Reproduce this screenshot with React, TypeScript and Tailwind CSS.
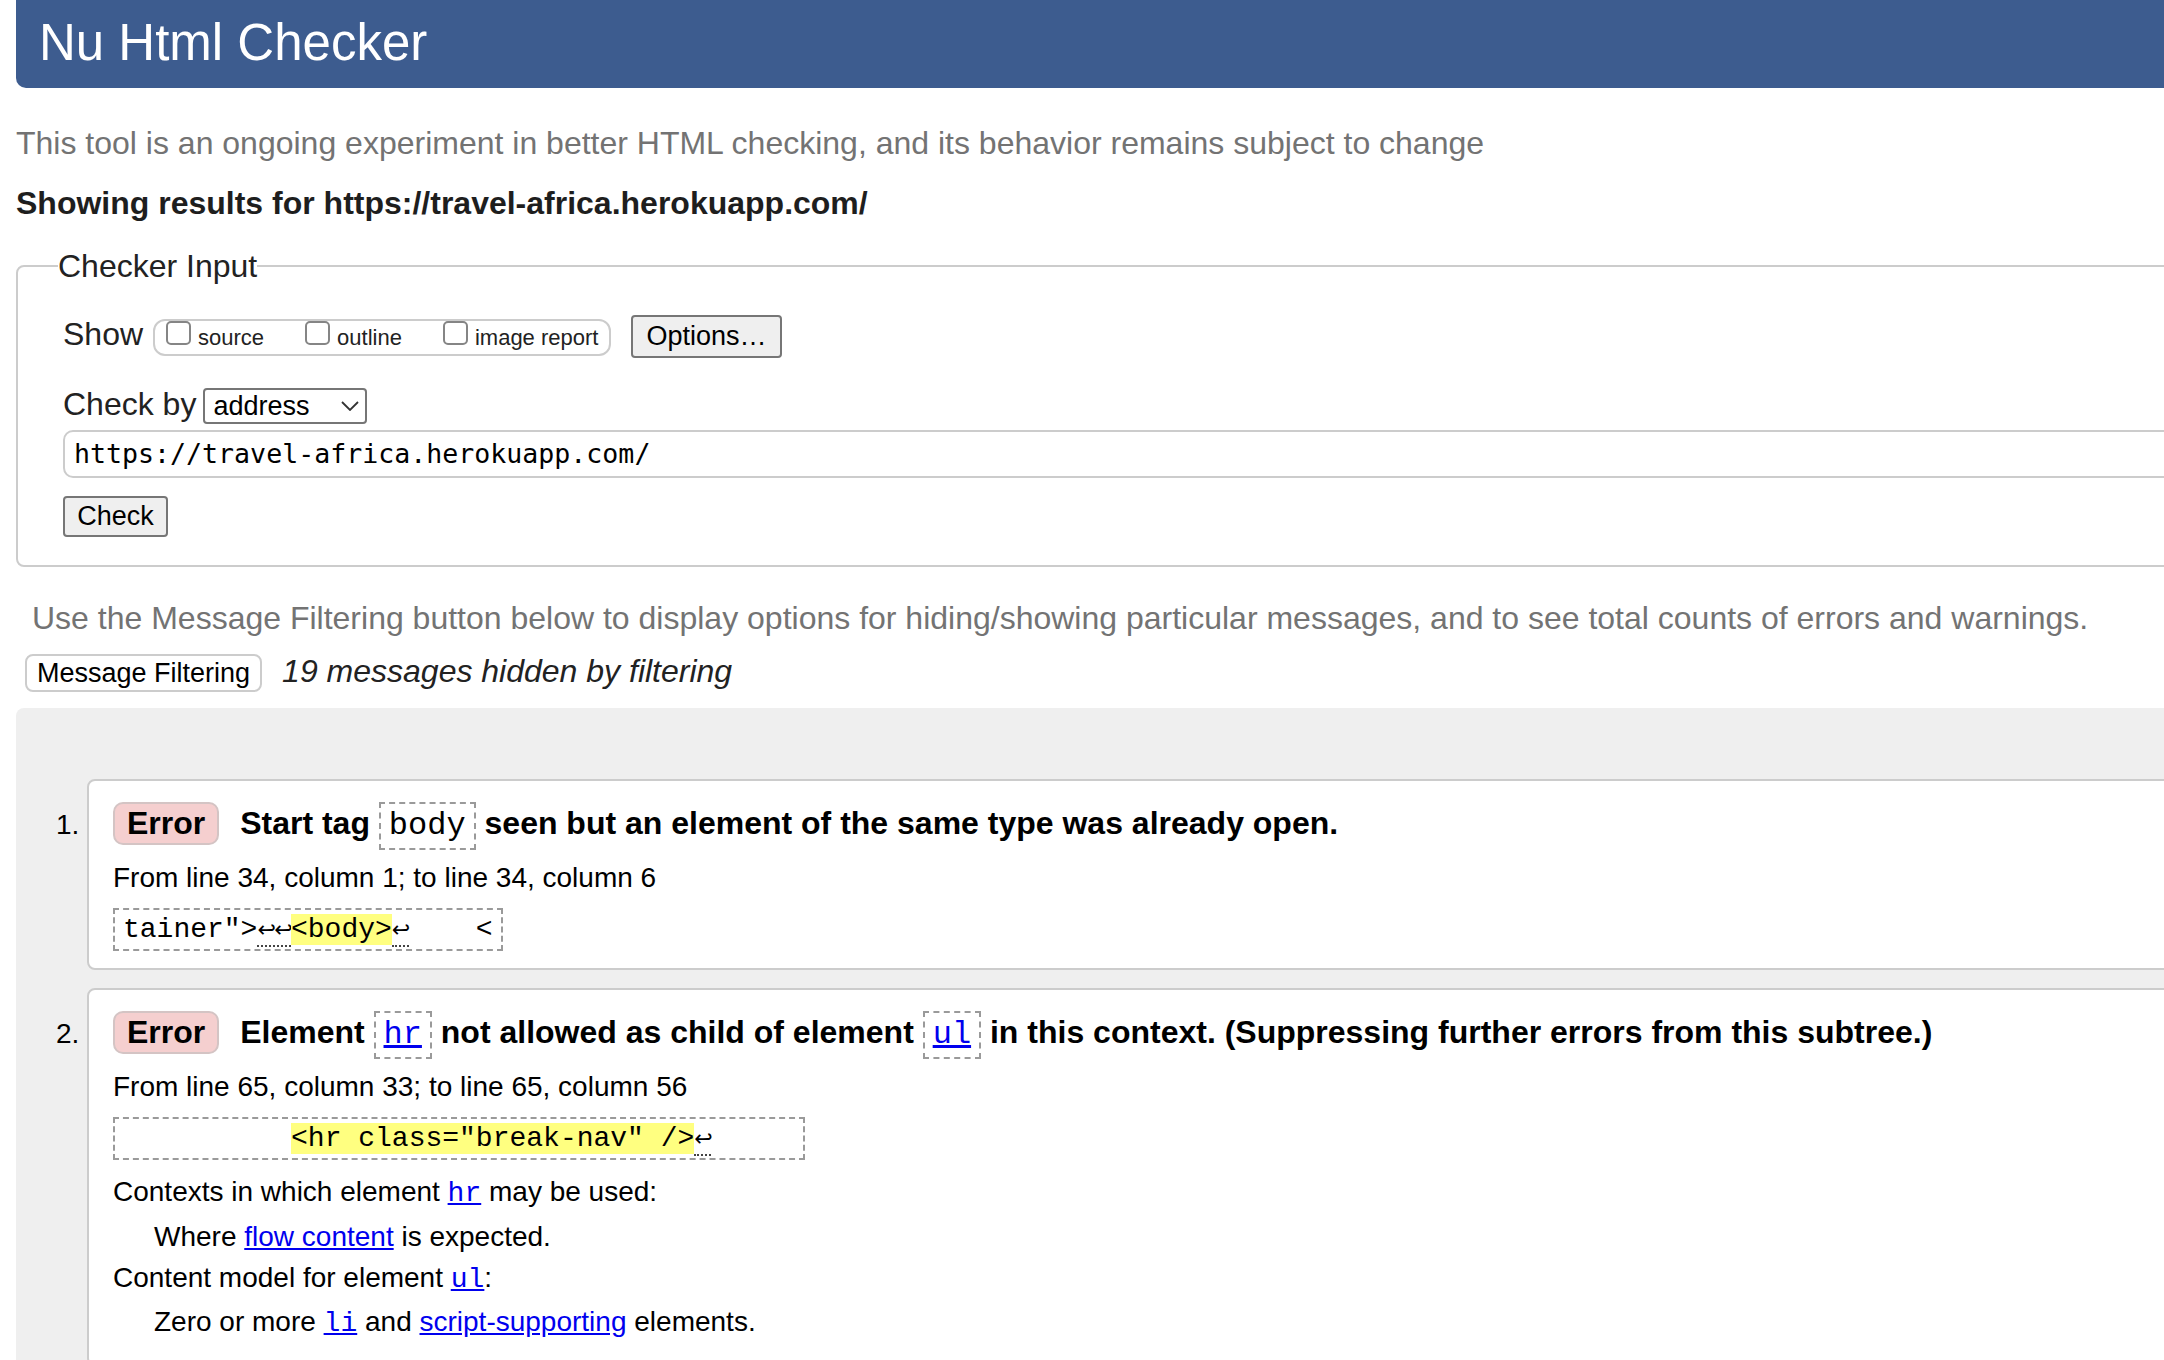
import React from "react";

const mono = "font-['Liberation_Mono','Courier_New',monospace]";

function Arrow() {
  return (
    <span className="inline-block w-[16.8px] overflow-visible text-center align-baseline font-['DejaVu_Sans',sans-serif] text-[22px] font-normal leading-none">
      ↩
    </span>
  );
}

function Dotted({ children }: { children: React.ReactNode }) {
  return <span className="border-b-2 border-dotted border-[#444]">{children}</span>;
}

function Mark({ children }: { children: React.ReactNode }) {
  return <span className="bg-[#ffff80]">{children}</span>;
}

// inline code box used in the message headings
function CodeBox({ children, link }: { children: string; link?: boolean }) {
  return (
    <span
      className={
        "inline-block border-2 border-dashed border-[#9a9a9a] px-[8px] text-[32px] font-normal leading-[44px] " +
        mono
      }
    >
      {link ? <a className="text-[#0000ee] underline">{children}</a> : children}
    </span>
  );
}

function CodeLink({ children }: { children: string }) {
  return <a className={"text-[#0000ee] underline " + mono}>{children}</a>;
}

function Badge() {
  return (
    <span className="mr-[12px] inline-block rounded-[10px] border-2 border-[#d4c4c4] bg-[#f5cfcf] px-[12px] leading-[39px]">
      Error
    </span>
  );
}

function Extract({ children }: { children: React.ReactNode }) {
  return (
    <div
      className={
        "mt-[10px] h-[43px] w-fit overflow-hidden whitespace-pre border-2 border-dashed border-[#9a9a9a] px-[8px] text-[28px] leading-[39px] text-black " +
        mono
      }
    >
      {children}
    </div>
  );
}

function Message({
  n,
  heading,
  from,
  extract,
  children,
  last,
}: {
  n: number;
  heading: React.ReactNode;
  from: string;
  extract: React.ReactNode;
  children?: React.ReactNode;
  last?: boolean;
}) {
  return (
    <div className={"flex " + (last ? "" : "mb-[18px]")}>
      <div className="w-[71px] shrink-0 pl-[40px] pt-[26px] text-[28px] leading-[40px] text-black">{n}.</div>
      <div className="flex-1 rounded-[8px] border-2 border-[#cccccc] bg-white pl-[24px] pt-[21px] pb-[17px] text-black">
        <div className="text-[32px] font-bold leading-[40px]">{heading}</div>
        <div className="mt-[8px] text-[28px] leading-[40px]">{from}</div>
        <Extract>{extract}</Extract>
        {children}
      </div>
    </div>
  );
}

function Checkbox({ label, last }: { label: string; last?: boolean }) {
  return (
    <span className={last ? "" : "mr-[41px]"}>
      <span className="mr-[7px] inline-block h-[24px] w-[25px] rounded-[5px] border-2 border-[#858585] bg-white align-baseline" />
      {label}
    </span>
  );
}

export default function App() {
  return (
    <div className="h-[1360px] w-[2164px] overflow-hidden bg-white font-['Liberation_Sans',Arial,sans-serif] text-[#222]">
      <div className="w-[2400px] pl-[16px]">
        <div className="h-[88px] rounded-b-[10px] bg-[#3d5c8f] pl-[23px] pt-[17px]">
          <h1 className="text-[51px] leading-[51px] text-white">Nu Html Checker</h1>
        </div>

        <p className="mt-[35px] text-[32px] leading-[40px] text-[#737373]">
          This tool is an ongoing experiment in better HTML checking, and its behavior remains subject to change
        </p>
        <p className="mt-[20px] text-[32px] font-bold leading-[40px] text-[#1e1e1e]">
          Showing results for https://travel-africa.herokuapp.com/
        </p>

        <fieldset className="mt-[23px] rounded-[8px] border-2 border-[#cccccc] pl-[40px] pt-[28px] pb-[28px]">
          <legend className="text-[32px] leading-[40px]">Checker Input</legend>
          <div className="pl-[5px]">
            <div className="flex items-baseline">
              <span className="text-[32px] leading-[40px]">Show</span>
              <div className="ml-[10px] h-[37px] rounded-[12px] border-2 border-[#cccccc] px-[11px] text-[22px] leading-[33px]">
                <Checkbox label="source" />
                <Checkbox label="outline" />
                <Checkbox label="image report" last />
              </div>
              <button className="ml-[20px] h-[43px] rounded-[4px] border-2 border-[#767676] bg-[#efefef] px-[13px] text-[27px] leading-[39px] text-black">
                Options…
              </button>
            </div>

            <div className="mt-[26px] flex items-baseline">
              <span className="text-[32px] leading-[40px]">Check by</span>
              <div className="ml-[7px] flex h-[36px] w-[164px] items-center justify-between rounded-[4px] border-2 border-[#767676] bg-white pl-[8px] pr-[6px] text-black">
                <span className="text-[27px] leading-[32px]">address</span>
                <svg width="18" height="10" viewBox="0 0 18 10" fill="none">
                  <path d="M1 1 L9 9 L17 1" stroke="#333" strokeWidth="1.8" />
                </svg>
              </div>
            </div>

            <div className="mt-[6px] flex h-[48px] items-center rounded-[10px] border-2 border-[#cccccc] pl-[9px] font-['DejaVu_Sans_Mono',monospace] text-[26.6px] leading-[44px] text-black">
              https://travel-africa.herokuapp.com/
            </div>

            <button className="mt-[18px] h-[41px] w-[105px] rounded-[4px] border-2 border-[#767676] bg-[#efefef] text-[27px] leading-[37px] text-black">
              Check
            </button>
          </div>
        </fieldset>

        <p className="ml-[16px] mt-[31px] text-[32px] leading-[40px] text-[#737373]">
          Use the Message Filtering button below to display options for hiding/showing particular messages, and to see
          total counts of errors and warnings.
        </p>

        <div className="mt-[13px] flex items-baseline">
          <button className="ml-[9px] h-[38px] rounded-[8px] border-2 border-[#cccccc] bg-white px-[10px] text-[27px] leading-[34px] text-black">
            Message Filtering
          </button>
          <span className="ml-[20px] text-[32px] italic leading-[40px] text-[#222]">19 messages hidden by filtering</span>
        </div>

        <div className="mt-[16px] rounded-[8px] bg-[#efefef] pt-[71px] pb-[40px]">
          <Message
            n={1}
            heading={
              <>
                <Badge /> Start tag <CodeBox>body</CodeBox> seen but an element of the same type was already open.
              </>
            }
            from="From line 34, column 1; to line 34, column 6"
            extract={
              <>
                tainer"&gt;
                <Dotted>
                  <Arrow />
                  <Arrow />
                </Dotted>
                <Mark>&lt;body&gt;</Mark>
                <Dotted>
                  <Arrow />
                </Dotted>
                {"    <"}
              </>
            }
          />
          <Message
            n={2}
            last
            heading={
              <>
                <Badge /> Element <CodeBox link>hr</CodeBox> not allowed as child of element <CodeBox link>ul</CodeBox>{" "}
                in this context. (Suppressing further errors from this subtree.)
              </>
            }
            from="From line 65, column 33; to line 65, column 56"
            extract={
              <>
                {"          "}
                <Mark>{'<hr class="break-nav" />'}</Mark>
                <Dotted>
                  <Arrow />
                </Dotted>
                {"     "}
              </>
            }
          >
            <div className="mt-[11px] text-[28px] text-black">
              <div className="leading-[42px]">
                Contexts in which element <CodeLink>hr</CodeLink> may be used:
              </div>
              <div className="pl-[41px] leading-[44px]">
                Where <a className="text-[#0000ee] underline">flow content</a> is expected.
              </div>
              <div className="leading-[38px]">
                Content model for element <CodeLink>ul</CodeLink>:
              </div>
              <div className="pl-[41px] leading-[46px]">
                Zero or more <CodeLink>li</CodeLink> and{" "}
                <a className="text-[#0000ee] underline">script-supporting</a> elements.
              </div>
            </div>
          </Message>
        </div>
      </div>
    </div>
  );
}
